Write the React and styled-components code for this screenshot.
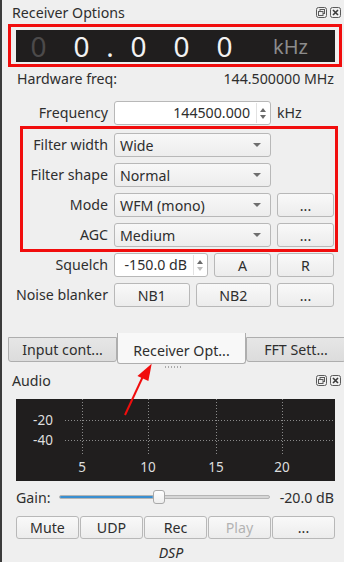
import React from "react";
import styled, { createGlobalStyle } from "styled-components";

const GlobalStyle = createGlobalStyle`
  html, body {
    margin: 0;
    padding: 0;
    background: #efefef;
  }
  body {
    font-family: "Noto Sans", "DejaVu Sans", sans-serif;
    font-size: 14.2px;
    color: #2e2e2e;
  }
`;

const Window = styled.div`
  position: relative;
  width: 344px;
  height: 562px;
  box-sizing: border-box;
  border-left: 2px solid #3b3b3b;
  background: #efefef;
  overflow: hidden;
  display: flex;
  flex-direction: column;
`;

const DockTitle = styled.div`
  display: flex;
  align-items: center;
  justify-content: space-between;
  height: ${(p) => p.$h || 24}px;
  padding: 0 3px 0 10px;
`;

const DockIcons = styled.div`
  display: flex;
  gap: 3px;
`;

const FreqDisplay = styled.div`
  display: flex;
  align-items: flex-end;
  height: 32px;
  width: 319px;
  margin: 6px 0 0 14px;
  padding-left: 1px;
  box-sizing: border-box;
  background: #201e1e;
`;

const Digit = styled.span`
  width: ${(p) => p.$w || 43}px;
  text-align: center;
  font-size: 28px;
  line-height: 32px;
  color: ${(p) => (p.$dim ? "#4c4a4a" : "#f2f2f2")};
`;

const Unit = styled.span`
  flex: 1;
  text-align: center;
  font-size: 20px;
  line-height: 30px;
  color: #8c8c8c;
`;

const HwRow = styled.div`
  display: flex;
  justify-content: space-between;
  margin: 6px 10px 0 15px;
  line-height: 22px;
`;

const Form = styled.div`
  display: grid;
  grid-template-columns: 96px 157px 57px;
  column-gap: 6px;
  row-gap: 6px;
  margin: 11px 0 0 10px;
`;

const Label = styled.div`
  text-align: right;
  line-height: 24px;
  white-space: nowrap;
  margin-bottom: ${(p) => p.$extra || 0}px;
`;

const Cell = styled.div`
  display: flex;
  gap: 6px;
  margin-bottom: ${(p) => p.$extra || 0}px;
`;

const Combo = styled.div`
  flex: 1;
  height: 24px;
  box-sizing: border-box;
  display: flex;
  align-items: center;
  justify-content: space-between;
  padding: 0 9px 0 5px;
  border: 1px solid #b8b8b8;
  border-radius: 3px;
  background: linear-gradient(#f8f8f8, #ededed);
`;

const Caret = styled.span`
  width: 0;
  height: 0;
  border-left: 4px solid transparent;
  border-right: 4px solid transparent;
  border-top: 4px solid #6e6e6e;
`;

const Spin = styled.div`
  width: ${(p) => p.$w}px;
  height: 24px;
  box-sizing: border-box;
  display: flex;
  align-items: center;
  border: 1px solid #b8b8b8;
  border-radius: 3px;
  background: #ffffff;
`;

const SpinText = styled.span`
  flex: 1;
  text-align: right;
  padding-right: 6px;
  line-height: 22px;
`;

const SpinArrows = styled.div`
  width: 11px;
  height: 20px;
  margin-right: 2px;
  display: flex;
  flex-direction: column;
  align-items: center;
  justify-content: center;
  gap: 3px;
  border-left: 1px solid #e2e2e2;
`;

const Arrow = styled.span`
  width: 0;
  height: 0;
  border-left: 3.5px solid transparent;
  border-right: 3.5px solid transparent;
  ${(p) => (p.$up ? "border-bottom" : "border-top")}: 4px solid
    ${(p) => (p.$off ? "#bdbdbd" : "#6a6a6a")};
`;

const Suffix = styled.div`
  line-height: 24px;
`;

const Button = styled.button`
  flex: 1;
  height: ${(p) => p.$h || 24}px;
  box-sizing: border-box;
  padding: 0;
  border: 1px solid #b8b8b8;
  border-radius: 3px;
  background: linear-gradient(#f9f9f9, #ececec);
  font: inherit;
  color: ${(p) => (p.disabled ? "#b3b3b3" : "#2e2e2e")};
`;

const Spacer = styled.div`
  flex: 1;
`;

const TabBar = styled.div`
  display: flex;
  align-items: flex-start;
  flex-shrink: 0;
  height: 32px;
  margin-left: 6px;
`;

const Tab = styled.div`
  width: ${(p) => p.$w}px;
  height: ${(p) => (p.$active ? 31 : 25)}px;
  margin-top: ${(p) => (p.$active ? 0 : 4)}px;
  padding-top: ${(p) => (p.$active ? 5 : 0)}px;
  box-sizing: border-box;
  flex-shrink: 0;
  text-align: center;
  line-height: ${(p) => (p.$active ? 25 : 23)}px;
  border: 1px solid #aeaeae;
  border-top: ${(p) => (p.$active ? "none" : "1px solid #aeaeae")};
  border-radius: 0 0 3px 3px;
  background: ${(p) => (p.$active ? "#f8f8f8" : "linear-gradient(#e6e6e6, #dcdcdc)")};
  white-space: nowrap;
`;

const Grip = styled.div`
  align-self: center;
  flex-shrink: 0;
  width: 16px;
  height: 2px;
  margin-top: 1px;
  background: repeating-linear-gradient(90deg, #a9a9a9 0 1px, transparent 1px 3px);
`;

const Plot = styled.svg`
  display: block;
  flex-shrink: 0;
  margin: 7px 0 0 14px;
  background: #201e1e;
  font-family: "Noto Sans", "DejaVu Sans", sans-serif;
`;

const GainRow = styled.div`
  display: flex;
  align-items: center;
  gap: 8px;
  height: 16px;
  flex-shrink: 0;
  margin: 8px 10px 0 14px;
`;

const Groove = styled.div`
  position: relative;
  width: 211px;
  height: 4px;
  border-radius: 2px;
  background: #d6d6d6;
  border: 1px solid #b5b5b5;
  box-sizing: border-box;
`;

const Fill = styled.div`
  height: 100%;
  border-radius: 2px;
  background: #3a8fd0;
`;

const Handle = styled.div`
  position: absolute;
  top: -6px;
  width: 12px;
  height: 14px;
  box-sizing: border-box;
  border: 1px solid #a9a9a9;
  border-radius: 3px;
  background: linear-gradient(#ffffff, #eeeeee);
`;

const GainValue = styled.span`
  margin-left: auto;
`;

const ButtonRow = styled.div`
  display: flex;
  gap: 1px;
  flex-shrink: 0;
  margin: 11px 9px 0 14px;
`;

const Footer = styled.div`
  flex-shrink: 0;
  text-align: center;
  font-style: italic;
  line-height: 18px;
  margin-top: 5px;
  padding-right: 4px;
`;

const Annotation = styled.div`
  position: absolute;
  left: ${(p) => p.$x - 2}px;
  top: ${(p) => p.$y}px;
  width: ${(p) => p.$w}px;
  height: ${(p) => p.$h}px;
  box-sizing: border-box;
  border: 3px solid #f10d0d;
  pointer-events: none;
`;

const ArrowOverlay = styled.svg`
  position: absolute;
  left: -2px;
  top: 0;
  pointer-events: none;
`;

function FloatIcon() {
  return (
    <svg width="11" height="11" viewBox="0 0 11 11">
      <rect x="0.5" y="0.5" width="10" height="10" rx="2" fill="none" stroke="#5a5a5a" />
      <rect x="4" y="2.5" width="4.5" height="4" fill="none" stroke="#5a5a5a" />
      <rect x="2.5" y="4.5" width="4.5" height="4" fill="#efefef" stroke="#5a5a5a" />
    </svg>
  );
}

function CloseIcon() {
  return (
    <svg width="11" height="11" viewBox="0 0 11 11">
      <rect x="0.5" y="0.5" width="10" height="10" rx="2" fill="none" stroke="#5a5a5a" />
      <path d="M3 3 L8 8 M8 3 L3 8" stroke="#3a3a3a" strokeWidth="1.6" />
    </svg>
  );
}

function Title({ text, h }) {
  return (
    <DockTitle $h={h}>
      <span>{text}</span>
      <DockIcons>
        <FloatIcon />
        <CloseIcon />
      </DockIcons>
    </DockTitle>
  );
}

function ComboBox({ value }) {
  return (
    <Combo>
      <span>{value}</span>
      <Caret />
    </Combo>
  );
}

function SpinBox({ value, width, downOff }) {
  return (
    <Spin $w={width}>
      <SpinText>{value}</SpinText>
      <SpinArrows>
        <Arrow $up />
        <Arrow $off={downOff} />
      </SpinArrows>
    </Spin>
  );
}

const xTicks = [
  { x: 66, t: "5" },
  { x: 132, t: "10" },
  { x: 200, t: "15" },
  { x: 266, t: "20" },
];

function AudioPlot() {
  return (
    <Plot width="319" height="82">
      {[21, 41].map((y) => (
        <line key={y} x1="49" x2="319" y1={y + 0.5} y2={y + 0.5} stroke="#8a8a8a" strokeDasharray="1 2" />
      ))}
      {xTicks.map((d) => (
        <line key={d.x} x1={d.x + 0.5} x2={d.x + 0.5} y1="0" y2="56" stroke="#8a8a8a" strokeDasharray="1 2" />
      ))}
      <text x="27" y="26" fill="#dedede" fontSize="13.5" textAnchor="middle">-20</text>
      <text x="27" y="46" fill="#dedede" fontSize="13.5" textAnchor="middle">-40</text>
      {xTicks.map((d) => (
        <text key={d.t} x={d.x} y="73" fill="#dedede" fontSize="13.5" textAnchor="middle">
          {d.t}
        </text>
      ))}
    </Plot>
  );
}

export default function App() {
  const gain = 93;
  return (
    <>
      <GlobalStyle />
      <Window>
        <Title text="Receiver Options" />
        <FreqDisplay>
          <Digit $dim>0</Digit>
          <Digit>0</Digit>
          <Digit $w={14}>.</Digit>
          <Digit>0</Digit>
          <Digit>0</Digit>
          <Digit>0</Digit>
          <Unit>kHz</Unit>
        </FreqDisplay>
        <HwRow>
          <span>Hardware freq:</span>
          <span>144.500000 MHz</span>
        </HwRow>

        <Form>
          <Label $extra={2}>Frequency</Label>
          <Cell $extra={2}>
            <SpinBox value="144500.000" width={157} />
          </Cell>
          <Suffix>kHz</Suffix>

          <Label>Filter width</Label>
          <Cell>
            <ComboBox value="Wide" />
          </Cell>
          <div />

          <Label>Filter shape</Label>
          <Cell>
            <ComboBox value="Normal" />
          </Cell>
          <div />

          <Label>Mode</Label>
          <Cell>
            <ComboBox value="WFM (mono)" />
          </Cell>
          <Cell>
            <Button>...</Button>
          </Cell>

          <Label>AGC</Label>
          <Cell>
            <ComboBox value="Medium" />
          </Cell>
          <Cell>
            <Button>...</Button>
          </Cell>

          <Label>Squelch</Label>
          <Cell>
            <SpinBox value="-150.0 dB" width={94} downOff />
            <Button>A</Button>
          </Cell>
          <Cell>
            <Button>R</Button>
          </Cell>

          <Label>Noise blanker</Label>
          <Cell>
            <Button>NB1</Button>
            <Button>NB2</Button>
          </Cell>
          <Cell>
            <Button>...</Button>
          </Cell>
        </Form>

        <Spacer />

        <TabBar>
          <Tab $w={109}>Input cont...</Tab>
          <Tab $w={129} $active>
            Receiver Opt...
          </Tab>
          <Tab $w={100}>FFT Sett...</Tab>
        </TabBar>
        <Grip />
        <Title text="Audio" />
        <AudioPlot />
        <GainRow>
          <span>Gain:</span>
          <Groove>
            <Fill style={{ width: gain }} />
            <Handle style={{ left: gain }} />
          </Groove>
          <GainValue>-20.0 dB</GainValue>
        </GainRow>
        <ButtonRow>
          <Button $h={23}>Mute</Button>
          <Button $h={23}>UDP</Button>
          <Button $h={23}>Rec</Button>
          <Button $h={23} disabled>
            Play
          </Button>
          <Button $h={23}>...</Button>
        </ButtonRow>
        <Footer>DSP</Footer>

        <Annotation $x={8} $y={24} $w={334} $h={43} />
        <Annotation $x={20} $y={126} $w={318} $h={126} />
        <ArrowOverlay width="344" height="562">
          <line x1="125" y1="415" x2="145" y2="372" stroke="#f10d0d" strokeWidth="2" />
          <polygon points="148,363 140,380 152,380" fill="#f10d0d" transform="rotate(24 148 372)" />
        </ArrowOverlay>
      </Window>
    </>
  );
}
